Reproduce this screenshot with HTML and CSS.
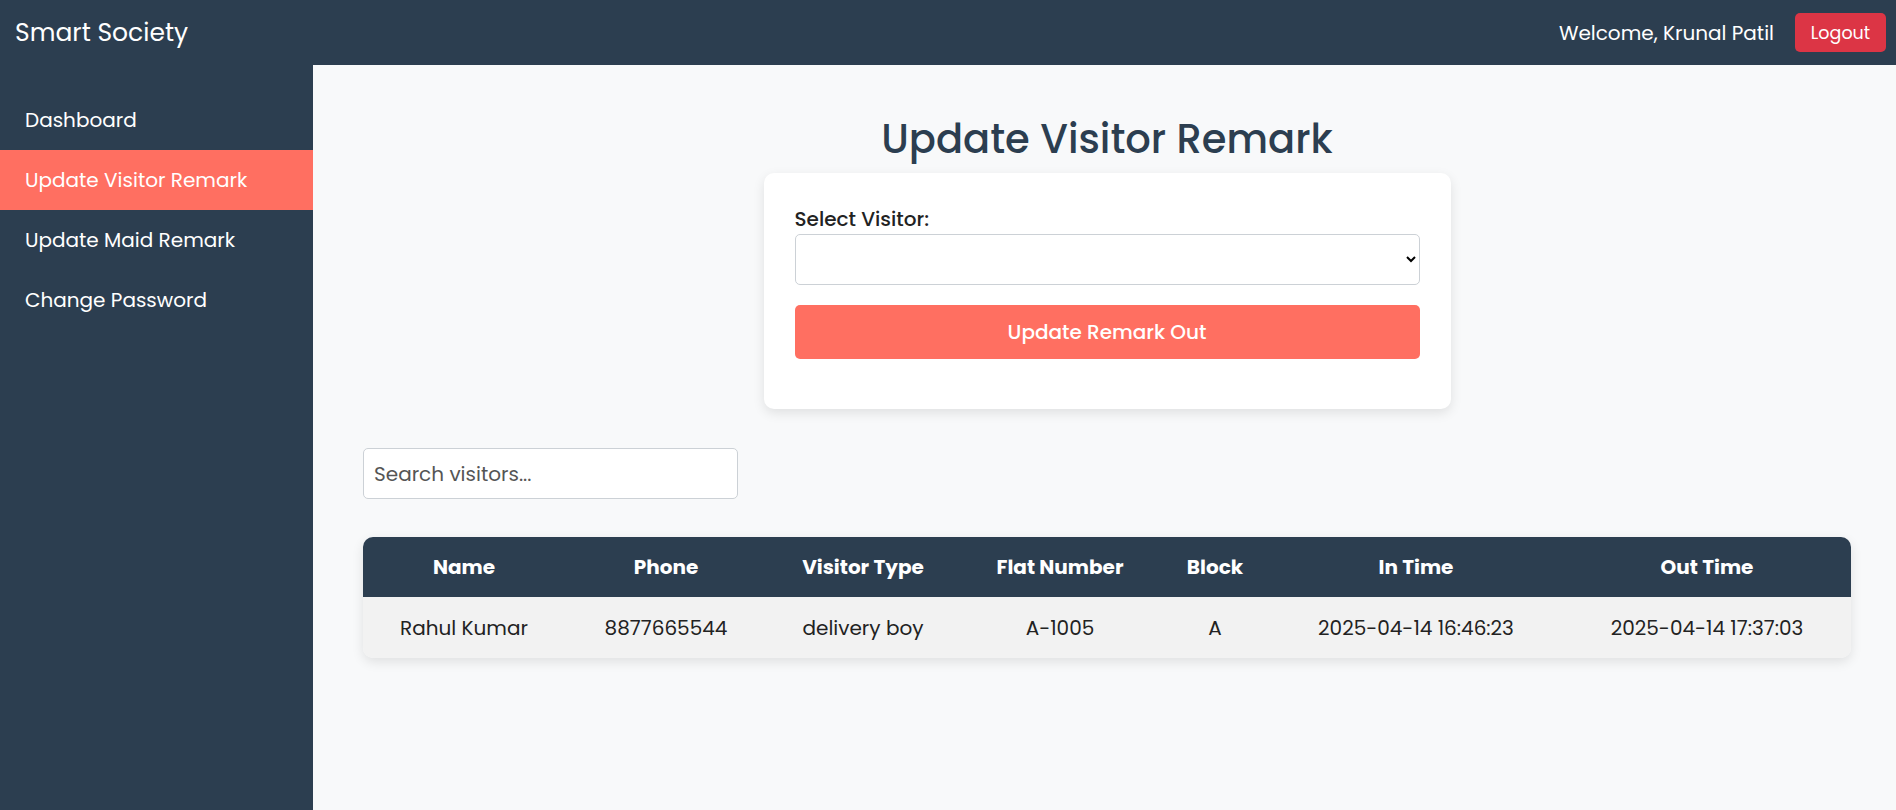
FILE: index.html
```html
<!DOCTYPE html>
<html lang="en">
<head>
<meta charset="utf-8">
<title>Update Visitor Remark</title>
<link rel="stylesheet" href="styles.css">
</head>
<body>
<header class="topbar">
  <div class="brand">Smart Society</div>
  <div class="user">
    <span class="welcome">Welcome, Krunal Patil</span>
    <button class="logout" type="button">Logout</button>
  </div>
</header>
<div class="layout">
  <aside class="sidebar">
    <nav class="menu">
      <a class="menu-item" href="#">Dashboard</a>
      <a class="menu-item active" href="#">Update Visitor Remark</a>
      <a class="menu-item" href="#">Update Maid Remark</a>
      <a class="menu-item" href="#">Change Password</a>
    </nav>
  </aside>
  <main class="main">
    <h1 class="page-title">Update Visitor Remark</h1>
    <div class="card">
      <form class="remark-form">
        <label class="field-label" for="visitor">Select Visitor:</label>
        <select class="field-select" id="visitor"><option value=""></option></select>
        <button class="submit" type="button">Update Remark Out</button>
      </form>
    </div>
    <input class="search" type="text" placeholder="Search visitors...">
    <div class="table-wrap">
      <table class="visitors">
        <colgroup>
          <col style="width:202px"><col style="width:202px"><col style="width:192px"><col style="width:202px"><col style="width:108px"><col style="width:294px"><col style="width:288px">
        </colgroup>
        <thead>
          <tr><th>Name</th><th>Phone</th><th>Visitor Type</th><th>Flat Number</th><th>Block</th><th>In Time</th><th>Out Time</th></tr>
        </thead>
        <tbody>
          <tr><td>Rahul Kumar</td><td>8877665544</td><td>delivery boy</td><td>A-1005</td><td>A</td><td>2025-04-14 16:46:23</td><td>2025-04-14 17:37:03</td></tr>
        </tbody>
      </table>
    </div>
  </main>
</div>
</body>
</html>
```
FILE: styles.css
```css
* { box-sizing: border-box; }
html, body { margin: 0; padding: 0; }
body {
  font-family: "Poppins", "Open Sans", "DejaVu Sans", sans-serif;
  background: #f8f9fa;
  color: #222;
  height: 810px;
  display: flex;
  flex-direction: column;
}
.topbar {
  height: 65px;
  flex: 0 0 65px;
  background: #2c3e50;
  color: #fff;
  display: flex;
  align-items: center;
  justify-content: space-between;
  padding: 0 10px 0 15px;
}
.brand { font-size: 25px; font-weight: 400; }
.user { display: flex; align-items: center; gap: 21px; }
.welcome { font-size: 20px; }
.logout {
  background: #dc3545;
  color: #fff;
  border: none;
  border-radius: 5px;
  width: 91px;
  height: 39px;
  font-family: inherit;
  font-size: 17.5px;
  padding: 0;
}
.layout { flex: 1; display: flex; }
.sidebar {
  width: 313px;
  flex: 0 0 313px;
  background: #2c3e50;
  padding-top: 25px;
}
.menu { display: flex; flex-direction: column; }
.menu-item {
  height: 60px;
  display: flex;
  align-items: center;
  padding-left: 25px;
  color: #fff;
  text-decoration: none;
  font-size: 20px;
}
.menu-item.active { background: #ff6f61; }
.main {
  flex: 1;
  padding: 0 45px 0 50px;
  display: flex;
  flex-direction: column;
}
.page-title {
  margin: 46px 0 6px;
  text-align: center;
  font-size: 40px;
  line-height: 56px;
  font-weight: 500;
  color: #2c3e50;
}
.card {
  width: 687px;
  align-self: center;
  background: #fff;
  border-radius: 10px;
  box-shadow: 0 4px 12px rgba(0,0,0,0.1);
  padding: 31px 31px 50px;
}
.remark-form { display: flex; flex-direction: column; }
.field-label { font-size: 20px; font-weight: 500; line-height: 30px; color: #222; }
.field-select {
  height: 51px;
  border: 1px solid #ccd1d6;
  border-radius: 5px;
  background: #fff;
  font-family: inherit;
  font-size: 20px;
  margin-bottom: 20px;
  padding: 0 10px;
}
.submit {
  height: 54px;
  border: none;
  border-radius: 5px;
  background: #ff6f61;
  color: #fff;
  font-family: inherit;
  font-size: 20px;
  font-weight: 500;
}
.search {
  margin-top: 39px;
  width: 375px;
  height: 51px;
  border: 1px solid #ccd1d6;
  border-radius: 5px;
  background: #fff;
  padding: 0 10px;
  font-family: inherit;
  font-size: 20px;
  color: #222;
}
.search::placeholder { color: #555; }
.table-wrap {
  margin-top: 38px;
  border-radius: 10px;
  overflow: hidden;
  box-shadow: 0 4px 12px rgba(0,0,0,0.1);
}
.visitors {
  width: 100%;
  border-collapse: collapse;
  table-layout: fixed;
}
.visitors th {
  background: #2c3e50;
  color: #fff;
  height: 60px;
  font-size: 20px;
  font-weight: 700;
  text-align: center;
  padding: 0;
}
.visitors td {
  background: #f2f2f2;
  height: 61px;
  font-size: 20px;
  text-align: center;
  color: #222;
  padding: 0;
}
```
